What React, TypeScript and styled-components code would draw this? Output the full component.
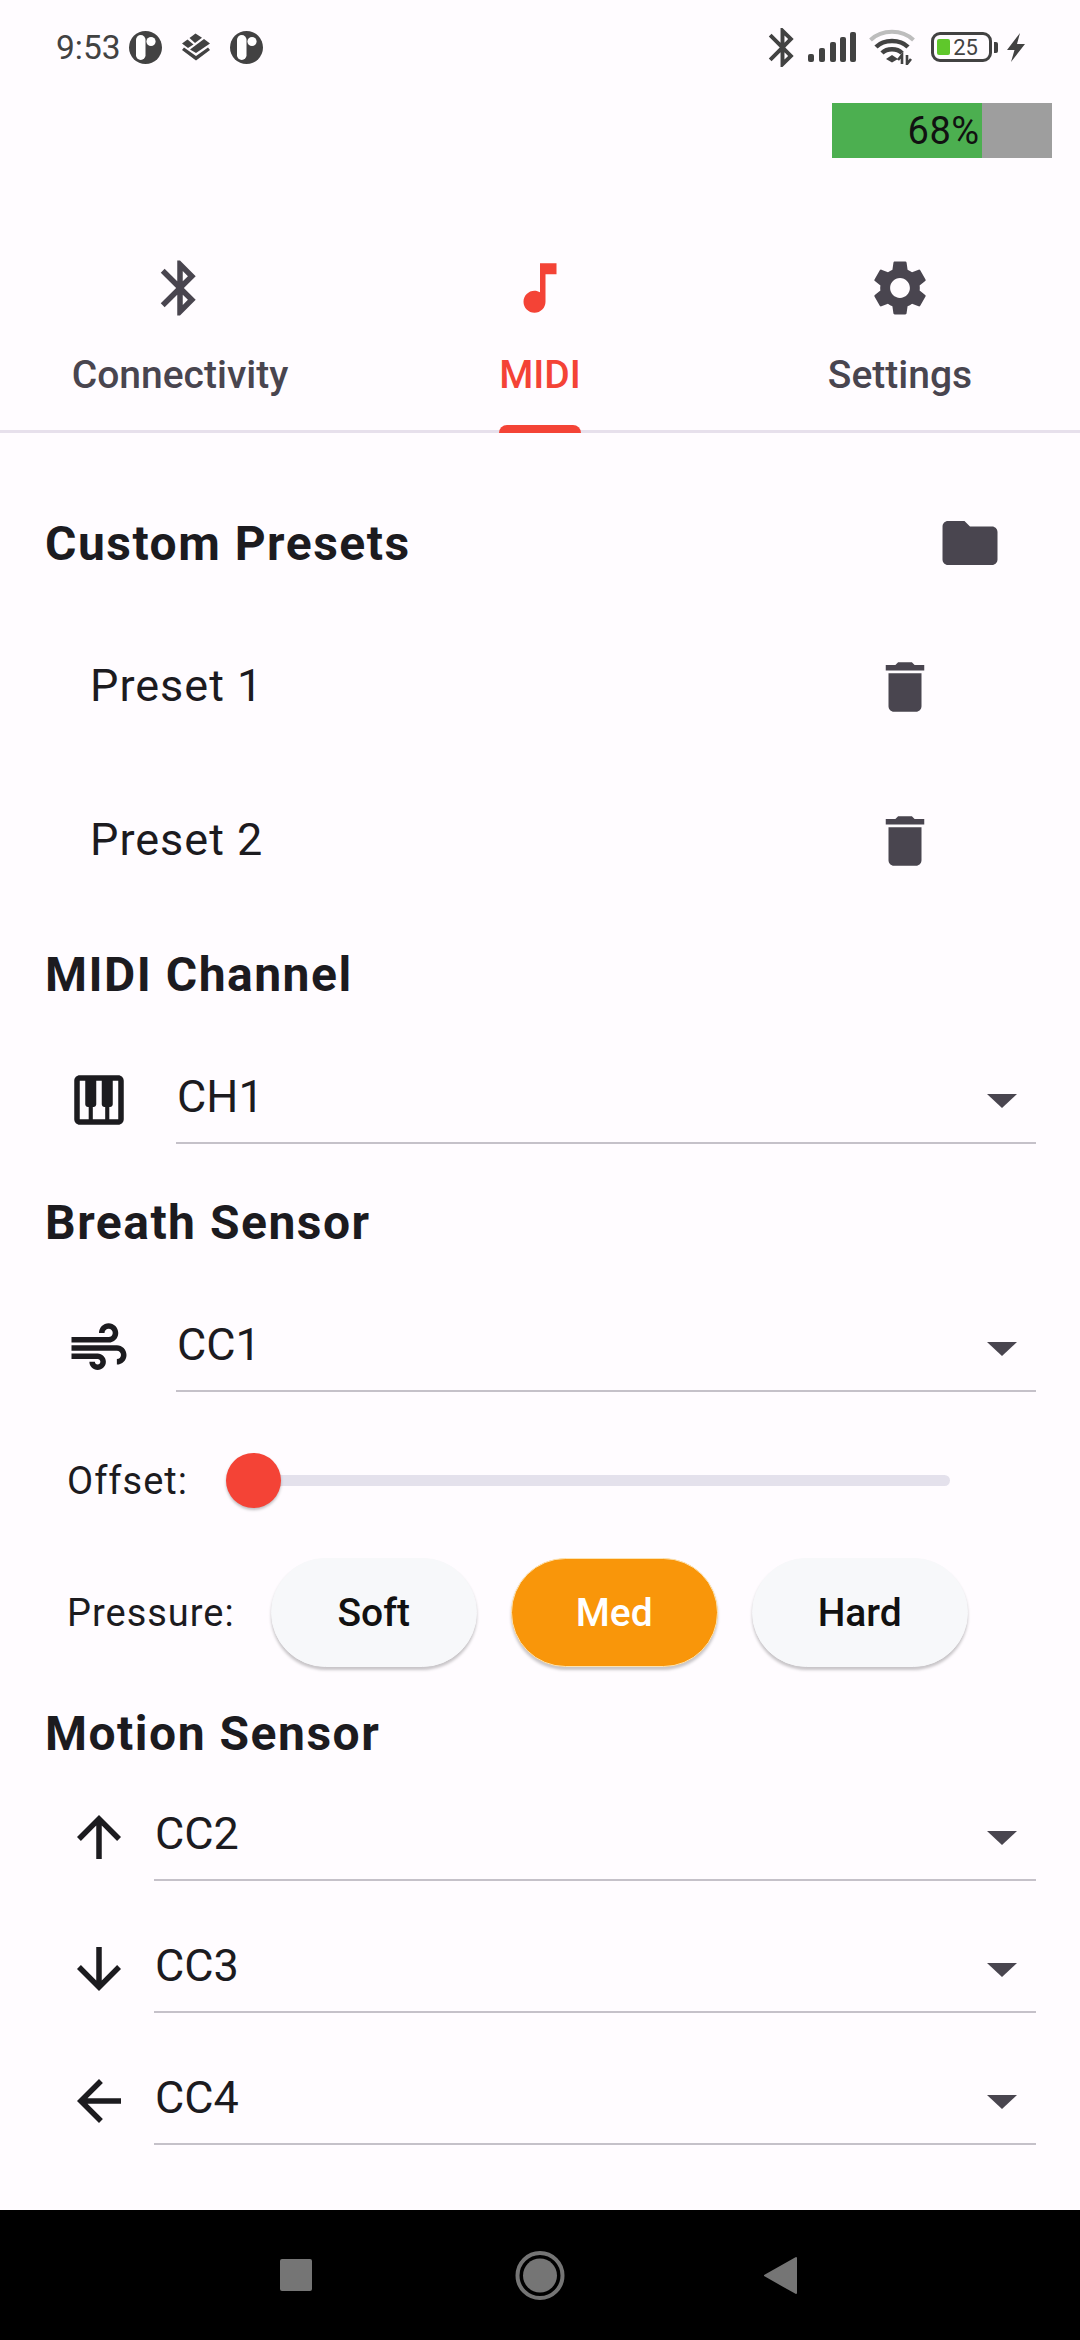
import styled, { createGlobalStyle } from "styled-components";
import {
  MdBluetooth,
  MdMusicNote,
  MdSettings,
  MdFolder,
  MdDelete,
  MdPiano,
  MdAir,
  MdArrowUpward,
  MdArrowDownward,
  MdArrowBack,
} from "react-icons/md";
import type { ReactNode } from "react";

const GlobalStyle = createGlobalStyle`
  html, body {
    margin: 0;
    padding: 0;
    background: #fffbfe;
    font-family: Roboto, "Liberation Sans", sans-serif;
  }
`;

const Page = styled.div`
  width: 1080px;
  height: 2340px;
  display: flex;
  flex-direction: column;
  background: #fffcff;
  color: #1c1b1f;
  overflow: hidden;
`;

const StatusBar = styled.div`
  height: 94px;
  flex: none;
  display: flex;
  align-items: center;
  justify-content: space-between;
  padding: 0 55px 0 56px;
`;
const StatusGroup = styled.div<{ $gap: number }>`
  display: flex;
  align-items: center;
  gap: ${(p) => p.$gap}px;
`;
const Clock = styled.span`
  font-size: 33.5px;
  color: #424242;
  margin-right: -12px;
`;
const StatusBluetooth = styled(MdBluetooth)`
  margin-right: -11px;
  margin-left: -10px;
`;
const BatteryBody = styled.div`
  position: relative;
  width: 61px;
  height: 30px;
  margin-left: 3px;
  box-sizing: border-box;
  border: 3px solid #424242;
  border-radius: 9px;
  display: flex;
  align-items: center;
  justify-content: center;
  font-size: 22px;
  color: #424242;
  padding-left: 8px;
`;
const BatteryFill = styled.div`
  position: absolute;
  left: 3px;
  top: 4px;
  width: 13px;
  height: 16px;
  background: #5fc72b;
  border-radius: 2px;
`;
const BatteryValue = styled.span`
  position: relative;
`;
const BatteryNub = styled.div`
  width: 4px;
  height: 11px;
  background: #424242;
  border-radius: 0 2px 2px 0;
  margin-left: -11px;
`;
const BoltSlot = styled.div`
  display: flex;
  margin-left: -4px;
`;

const LevelRow = styled.div`
  flex: none;
  display: flex;
  justify-content: flex-end;
  padding: 9px 28px 0 0;
`;
const LevelTrack = styled.div`
  width: 220px;
  height: 55px;
  background: #9e9e9e;
`;
const LevelFill = styled.div`
  height: 100%;
  background: #4caf50;
  display: flex;
  align-items: center;
  justify-content: flex-end;
  padding-right: 2px;
  box-sizing: border-box;
  font-size: 38px;
  letter-spacing: 0.5px;
  color: #111;
`;

const Tabs = styled.div`
  flex: none;
  display: grid;
  grid-template-columns: repeat(3, 1fr);
  padding-top: 97px;
  height: 275px;
  box-sizing: border-box;
  border-bottom: 3px solid #e7e0ec;
`;
const Tab = styled.div<{ $active?: boolean }>`
  position: relative;
  display: flex;
  flex-direction: column;
  align-items: center;
  color: ${(p) => (p.$active ? "#f44336" : "#49454f")};
  font-size: 39px;
  font-weight: 500;
  line-height: 44px;
  gap: 32px;
  svg {
    display: block;
  }
`;
const TabMark = styled.div`
  position: absolute;
  left: 139px;
  bottom: -3px;
  width: 82px;
  height: 8px;
  background: #f44336;
  border-radius: 8px 8px 0 0;
`;

const Content = styled.div`
  flex: 1;
  padding: 77px 44px 0 45px;
  display: flex;
  flex-direction: column;
`;
const TitleRow = styled.div`
  height: 66px;
  margin-bottom: 34px;
  display: flex;
  align-items: center;
  justify-content: space-between;
  padding-right: 33px;
  color: #49454f;
`;
const Title = styled.div<{ $top?: number; $bottom?: number }>`
  font-size: 48px;
  font-weight: 700;
  letter-spacing: 1.5px;
  line-height: 58px;
  padding-top: 2px;
  color: #1c1b1f;
  margin-top: ${(p) => p.$top ?? 0}px;
  margin-bottom: ${(p) => p.$bottom ?? 0}px;
`;
const PresetRow = styled.div`
  height: 154px;
  box-sizing: border-box;
  padding: 0 98px 3px 45px;
  display: flex;
  align-items: center;
  justify-content: space-between;
  font-size: 45px;
  letter-spacing: 1px;
  color: #1c1b1f;
  svg {
    color: #49454f;
    margin-top: 3px;
  }
`;

const SelectRow = styled.div<{ $pitch: number; $gap: number }>`
  display: flex;
  align-items: flex-start;
  height: ${(p) => p.$pitch}px;
  padding-left: 21px;
  column-gap: ${(p) => p.$gap}px;
  svg {
    flex: none;
  }
`;
const IconSlot = styled.div`
  flex: none;
  width: 66px;
  height: 66px;
  margin-top: 10px;
  color: #1c1b1f;
`;
const Select = styled.div`
  flex: 1;
  height: 87px;
  box-sizing: border-box;
  border-bottom: 2px solid #c5c1c9;
  display: flex;
  align-items: center;
  justify-content: space-between;
  padding: 0 19px 6px 1px;
  font-size: 45px;
  color: #1c1b1f;
`;
const Caret = styled.div`
  width: 0;
  height: 0;
  margin-top: 8px;
  border-left: 15px solid transparent;
  border-right: 15px solid transparent;
  border-top: 14px solid #49454f;
`;

const SliderRow = styled.div`
  height: 55px;
  margin-top: 61px;
  display: flex;
  align-items: center;
  padding-left: 22px;
`;
const FieldLabel = styled.span`
  font-size: 38px;
  letter-spacing: 1px;
  color: #1c1b1f;
`;
const SliderTrack = styled.div`
  position: relative;
  width: 696px;
  height: 11px;
  margin-left: 66px;
  background: #e4e1ec;
  border-radius: 6px;
`;
const SliderThumb = styled.div`
  position: absolute;
  left: -28px;
  top: -22px;
  width: 55px;
  height: 55px;
  border-radius: 50%;
  background: #f44336;
  box-shadow: 0 2px 3px rgba(0, 0, 0, 0.25);
`;
const PressureRow = styled.div`
  height: 109px;
  margin-top: 50px;
  display: flex;
  align-items: center;
  padding-left: 22px;
`;
const PressureButtons = styled.div`
  display: flex;
  gap: 34px;
  margin-left: 36px;
`;
const PressureButton = styled.div<{ $active?: boolean; $width: number }>`
  width: ${(p) => p.$width}px;
  height: 109px;
  box-sizing: border-box;
  border-radius: 55px;
  display: flex;
  align-items: center;
  justify-content: center;
  font-size: 39px;
  font-weight: 500;
  color: ${(p) => (p.$active ? "#fff" : "#111")};
  background: ${(p) => (p.$active ? "#f9960a" : "#f7f8fa")};
  border: 1px solid ${(p) => (p.$active ? "#fde3b0" : "#f7f8fa")};
  box-shadow: 0 3px 3px rgba(0, 0, 0, 0.22);
`;

const NavBar = styled.div`
  flex: none;
  height: 130px;
  background: #000;
  display: flex;
  align-items: flex-start;
  justify-content: center;
  svg {
    display: block;
  }
`;

const Pebble = () => (
  <svg width="33" height="33" viewBox="0 0 33 33">
    <circle cx="16.5" cy="16.5" r="16.5" fill="#424242" />
    <rect x="7" y="4" width="9.5" height="25" rx="4.75" fill="#fff" />
    <circle cx="22" cy="10.5" r="4.6" fill="#fff" />
  </svg>
);

const Layers = () => (
  <svg width="28" height="28" viewBox="0 0 28 28" fill="#424242">
    <path d="M13.5 0.5 L20 4.8 L13 10 L7.5 5 Z" />
    <path d="M0 10.5 L5.5 6.5 L11.5 11.5 L6 15 Z" />
    <path d="M22 6 L28 10.5 L14 20 L8 16.5 Z" />
    <path d="M2 14.5 L14 23 L26 14.5 L28 17 L14 27.5 L0 17 Z" />
  </svg>
);

const Signal = () => (
  <svg width="48" height="30" viewBox="0 0 48 30" fill="#424242">
    <rect x="0" y="22" width="6" height="8" rx="2" />
    <rect x="11" y="16" width="6" height="14" rx="2" />
    <rect x="22" y="10" width="6" height="20" rx="2" />
    <rect x="32" y="5" width="6" height="25" rx="2" />
    <rect x="42" y="0" width="6" height="30" rx="2" />
  </svg>
);

const Wifi = () => (
  <svg width="46" height="36" viewBox="0 0 46 36" fill="none" strokeLinecap="butt">
    <path d="M1.5 11 C13 0 33 0 44.5 11" stroke="#bdbdbd" strokeWidth="4" />
    <path d="M7 18 C15 10 31 10 39 18" stroke="#424242" strokeWidth="4.5" />
    <path d="M13 24 C18 19 28 19 33 24" stroke="#424242" strokeWidth="4.5" />
    <path d="M17 30 L23 26 L29 30 L23 33.5 Z" fill="#424242" />
    <path d="M33 35 V26 L29 31 M38 26 V35 L42 30" stroke="#424242" strokeWidth="2.6" />
  </svg>
);

const Bolt = () => (
  <svg width="18" height="29" viewBox="0 0 18 29" fill="#424242">
    <path d="M13 0 L0 17 H7.5 L4 29 L18 11 H10 Z" />
  </svg>
);

function CcSelect({ icon, value, pitch, gap }: { icon: ReactNode; value: string; pitch: number; gap: number }) {
  return (
    <SelectRow $pitch={pitch} $gap={gap}>
      <IconSlot>{icon}</IconSlot>
      <Select>
        {value}
        <Caret />
      </Select>
    </SelectRow>
  );
}

export default function App() {
  const level = 68;
  return (
    <Page>
      <GlobalStyle />
      <StatusBar>
        <StatusGroup $gap={20}>
          <Clock>9:53</Clock>
          <Pebble />
          <Layers />
          <Pebble />
        </StatusGroup>
        <StatusGroup $gap={13}>
          <StatusBluetooth size={47} color="#424242" />
          <Signal />
          <Wifi />
          <BatteryBody>
            <BatteryFill />
            <BatteryValue>25</BatteryValue>
          </BatteryBody>
          <BatteryNub />
          <BoltSlot>
            <Bolt />
          </BoltSlot>
        </StatusGroup>
      </StatusBar>

      <LevelRow>
        <LevelTrack>
          <LevelFill style={{ width: `${level}%` }}>68%</LevelFill>
        </LevelTrack>
      </LevelRow>

      <Tabs>
        <Tab>
          <MdBluetooth size={66} />
          Connectivity
        </Tab>
        <Tab $active>
          <MdMusicNote size={66} />
          MIDI
          <TabMark />
        </Tab>
        <Tab>
          <MdSettings size={66} />
          Settings
        </Tab>
      </Tabs>

      <Content>
        <TitleRow>
          <Title>Custom Presets</Title>
          <MdFolder size={66} />
        </TitleRow>
        <PresetRow>
          Preset 1
          <MdDelete size={66} />
        </PresetRow>
        <PresetRow>
          Preset 2
          <MdDelete size={66} />
        </PresetRow>

        <Title $top={26} $bottom={53}>MIDI Channel</Title>
        <CcSelect icon={<MdPiano size={66} />} value="CH1" pitch={87} gap={44} />

        <Title $top={48} $bottom={53}>Breath Sensor</Title>
        <CcSelect icon={<MdAir size={66} />} value="CC1" pitch={87} gap={44} />

        <SliderRow>
          <FieldLabel>Offset:</FieldLabel>
          <SliderTrack>
            <SliderThumb />
          </SliderTrack>
        </SliderRow>
        <PressureRow>
          <FieldLabel>Pressure:</FieldLabel>
          <PressureButtons>
            <PressureButton $width={206}>Soft</PressureButton>
            <PressureButton $width={207} $active>Med</PressureButton>
            <PressureButton $width={216}>Hard</PressureButton>
          </PressureButtons>
        </PressureRow>

        <Title $top={36} $bottom={31}>Motion Sensor</Title>
        <CcSelect icon={<MdArrowUpward size={66} />} value="CC2" pitch={132} gap={22} />
        <CcSelect icon={<MdArrowDownward size={66} />} value="CC3" pitch={132} gap={22} />
        <CcSelect icon={<MdArrowBack size={66} />} value="CC4" pitch={132} gap={22} />
      </Content>

      <NavBar>
        <svg width="1080" height="130" viewBox="0 0 1080 130">
          <rect x="280" y="49" width="32" height="32" rx="2" fill="#757575" />
          <circle cx="540" cy="65.5" r="22.5" fill="none" stroke="#757575" strokeWidth="4" />
          <circle cx="540" cy="65.5" r="17" fill="#757575" />
          <path d="M796 48 V83 L765 65.5 Z" fill="#757575" stroke="#757575" strokeWidth="2" strokeLinejoin="round" />
        </svg>
      </NavBar>
    </Page>
  );
}
